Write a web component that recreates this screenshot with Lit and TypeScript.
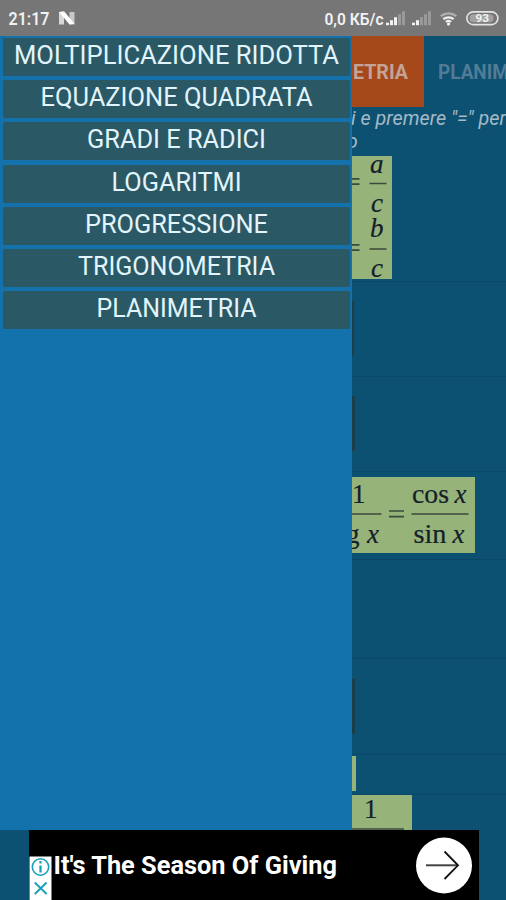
import { LitElement, html, svg, css } from "lit";
import { customElement } from "lit/decorators.js";

const MENU: [string, number][] = [
  ["MOLTIPLICAZIONE RIDOTTA", 325],
  ["EQUAZIONE QUADRATA", 272],
  ["GRADI E RADICI", 179],
  ["LOGARITMI", 130],
  ["PROGRESSIONE", 183],
  ["TRIGONOMETRIA", 197],
  ["PLANIMETRIA", 160],
];

@customElement("status-bar")
class StatusBar extends LitElement {
  static styles = css`
    :host { display: block; height: 36px; flex: none; background: #767676; }
    svg { display: block; }
    text { font-family: Roboto, sans-serif; font-weight: 500; fill: #f2f2f2; }
    .time { font-size: 17.500px; font-weight: 600; }
    .rate { font-size: 17px; font-weight: 600; }
    .level { font-size: 11.500px; font-weight: 700; }
    .dim { fill: #999; }
    .lit { fill: #f2f2f2; }
  `;

  bars(x: number, lit: number) {
    return [2.5, 5, 8, 11, 14].map(
      (h, i) => svg`<rect class=${i < lit ? "lit" : "dim"} x=${x + i * 4} y=${25.2 - h} width="3" height=${h} />`
    );
  }

  render() {
    return html`<svg width="506" height="36" viewBox="0 0 506 36">
      <text class="time" x="8.500" y="25" textLength="41" lengthAdjust="spacingAndGlyphs">21:17</text>
      <path d="M59 12h5v12.500h-5z" fill="#d8d8d8" /><path d="M69.500 12h5v12.500h-5z" fill="#c8c8c8" />
      <path d="M59 12l5-.7 10.500 12.500-5 .7z" fill="#fff" />
      <text class="rate" x="324.500" y="25" textLength="59" lengthAdjust="spacingAndGlyphs">0,0 КБ/с</text>
      ${this.bars(386, 3)}${this.bars(412, 2)}
      <g fill="none" stroke-width="2.200">
        <path d="M440.700 16.200a12 12 0 0 1 15.600 0" stroke="#b0b0b0" />
        <path d="M443.300 19.200a8 8 0 0 1 10.400 0" stroke="#f0f0f0" />
        <path d="M445.900 22a4.200 4.200 0 0 1 5.200 0" stroke="#f0f0f0" />
      </g>
      <circle cx="448.500" cy="24" r="1.500" fill="#fff" />
      <rect x="466.900" y="11.900" width="31" height="12.700" rx="6.300" fill="none" stroke="#e4e4e4" stroke-width="1.600" />
      <rect x="469.500" y="14.300" width="24" height="8" rx="4" fill="#a2a2a2" />
      <text class="level" x="475.500" y="22.300" textLength="13.500" lengthAdjust="spacingAndGlyphs">93</text>
    </svg>`;
  }
}

@customElement("nav-drawer")
class NavDrawer extends LitElement {
  static styles = css`
    :host { display: block; width: 352px; flex: none; box-sizing: border-box; padding: 2px 2px 0 2.500px; background: #1372ab; }
    ul { list-style: none; margin: 0; padding: 0; display: flex; flex-direction: column; gap: 4.200px; }
    li { height: 38px; background: #2a5965; border-radius: 1.500px; }
    svg { display: block; }
    text { font: 400 25.600px Roboto, sans-serif; fill: #e2f4fc; text-anchor: middle; }
  `;

  render() {
    return html`<ul>
      ${MENU.map(
        ([label, w]) => html`<li><svg width="347" height="38">
          <text x="173.500" y="26.300" textLength=${w} lengthAdjust="spacingAndGlyphs">${label}</text>
        </svg></li>`
      )}
    </ul>`;
  }
}

@customElement("formula-page")
class FormulaPage extends LitElement {
  static styles = css`
    :host { display: block; flex: 1; min-width: 0; overflow: hidden; background: #0c5072; }
    svg { display: block; }
    .tabs { display: flex; height: 71px; }
    .tab { flex: none; width: 72px; background: #a5481a; }
    .tab.next { width: 82px; background: none; }
    .tab text { font: 700 20.500px Roboto, sans-serif; fill: #c3a496; }
    .tab.next text { fill: #527c95; }
    .hint { height: 49px; }
    .hint text { font: italic 400 20.500px Roboto, sans-serif; fill: #a4bac6; }
    .row { box-sizing: border-box; border-bottom: 1.500px solid #0a4868; }
    .card { background: #96b37a; overflow: hidden; }
    .r1 { height: 126px; } .r1 .card { width: 40px; height: 123px; }
    .r2 { height: 95px; padding-top: 19px; } .r2 .edge { width: 1.500px; height: 55px; }
    .r3 { height: 95px; padding-top: 19px; } .r3 .edge, .r6 .edge { width: 3px; height: 55px; }
    .r4 { height: 88px; padding-top: 5px; } .r4 .card { width: 123px; height: 76px; }
    .r5 { height: 99px; }
    .r6 { height: 96px; padding-top: 20px; }
    .r7 { height: 40px; padding-top: .500px; } .r7 .card { width: 3.500px; height: 35px; }
    .r8 { height: 35px; border: 0; } .r8 .card { width: 59.500px; height: 35px; }
    .edge { background: #1b3f4a; }
    .math { font: 27px "Liberation Serif", serif; fill: #14202a; stroke: #14202a; stroke-width: .2; }
    .it { font-style: italic; }
    .bar { stroke: #3b4a3d; stroke-width: 1.700; fill: none; }
  `;

  render() {
    return html`
      <div class="tabs">
        <div class="tab"><svg width="72" height="71">
          <text x="1" y="43.200" textLength="55" lengthAdjust="spacingAndGlyphs">ETRIA</text></svg></div>
        <div class="tab next"><svg width="82" height="71">
          <text x="14" y="43.200" textLength="124" lengthAdjust="spacingAndGlyphs">PLANIMETRIA</text></svg></div>
      </div>
      <div class="hint"><svg width="154" height="49">
        <text x="-1" y="17.500" textLength="155" lengthAdjust="spacingAndGlyphs">i e premere "=" per</text>
        <text x="-5.500" y="40.500">o</text></svg></div>
      <div class="row r1"><div class="card"><svg class="math" width="40" height="123">
        <text class="it" x="18" y="16.500">a</text>
        <text class="it" x="19" y="55.500">c</text>
        <text class="it" x="18" y="80.500">b</text>
        <text class="it" x="19" y="120.500">c</text>
        <path class="bar" d="M17.500 27.500h17M17.500 93h17M0 22.800h7.500M0 28.200h7.500M0 88.800h7.500M0 94.200h7.500" />
      </svg></div></div>
      <div class="row r2"><div class="edge"></div></div>
      <div class="row r3"><div class="edge"></div></div>
      <div class="row r4"><div class="card"><svg class="math" width="123" height="76">
        <text x="0" y="25.500">1</text>
        <text x="-6" y="65.500">g</text><text class="it" x="15" y="65.500">x</text>
        <text x="60" y="25.500" textLength="37" lengthAdjust="spacingAndGlyphs">cos</text><text class="it" x="102.500" y="25.500">x</text>
        <text x="61.500" y="65.500" textLength="33" lengthAdjust="spacingAndGlyphs">sin</text><text class="it" x="100.500" y="65.500">x</text>
        <path class="bar" d="M0 37h29.500M59.500 37h57M37 34h15M37 39.700h15" />
      </svg></div></div>
      <div class="row r5"></div>
      <div class="row r6"><div class="edge"></div></div>
      <div class="row r7"><div class="card"></div></div>
      <div class="row r8"><div class="card"><svg class="math" width="60" height="35">
        <text x="12" y="23">1</text><path class="bar" d="M0 34h52" />
      </svg></div></div>`;
  }
}

@customElement("ad-banner")
class AdBanner extends LitElement {
  static styles = css`
    :host { display: block; height: 70px; flex: none; background: #0c5072; padding: 0 27.500px 0 29px; }
    svg { display: block; background: #000; }
    text { font: 700 26.300px Roboto, sans-serif; fill: #fff; }
  `;

  render() {
    return html`<svg width="449.500" height="70" viewBox="29 0 449.500 70">
      <rect x="29.500" y="26.500" width="22" height="43.500" fill="#fff" />
      <g fill="none" stroke="#169fb8" stroke-width="1.600">
        <circle cx="40.500" cy="37" r="8.200" />
        <path d="M40.500 35.500v7M40.500 31v2.500" stroke-width="2.200" />
        <path d="M34.800 52.500l11.800 11.500M46.600 52.500L34.800 64" stroke-width="1.900" />
      </g>
      <text x="53.500" y="43.700" textLength="283.500" lengthAdjust="spacingAndGlyphs">It's The Season Of Giving</text>
      <circle cx="444" cy="35.500" r="28" fill="#fff" />
      <path d="M426 35.300h31.500" fill="none" stroke="#444" stroke-width="2" />
      <path d="M444.500 21.500L458 35.300 444.500 49" fill="none" stroke="#111" stroke-width="1.800" />
    </svg>`;
  }
}

@customElement("app-root")
class AppRoot extends LitElement {
  static styles = css`
    :host { display: flex; flex-direction: column; width: 506px; height: 900px; overflow: hidden; background: #0c5072; }
    main { display: flex; height: 794px; flex: none; }
  `;

  render() {
    return html`<status-bar></status-bar>
      <main><nav-drawer></nav-drawer><formula-page></formula-page></main>
      <ad-banner></ad-banner>`;
  }
}
